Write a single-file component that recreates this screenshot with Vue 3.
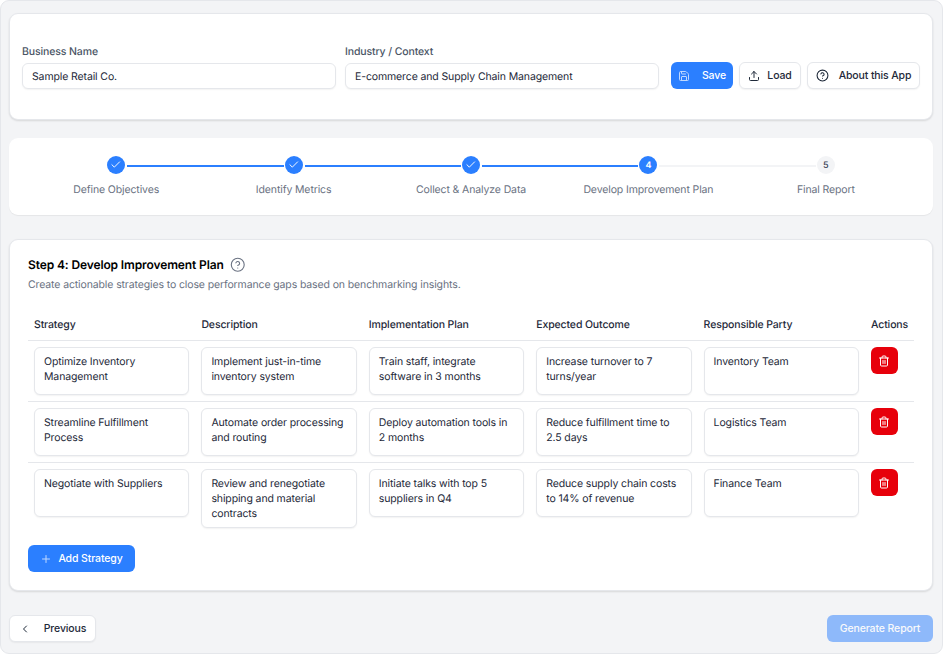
<script setup>
const steps = [
  { label: 'Define Objectives', state: 'done' },
  { label: 'Identify Metrics', state: 'done' },
  { label: 'Collect & Analyze Data', state: 'done' },
  { label: 'Develop Improvement Plan', state: 'active' },
  { label: 'Final Report', state: 'todo' },
]
const columns = ['Strategy', 'Description', 'Implementation Plan', 'Expected Outcome', 'Responsible Party']
const rows = [
  ['Optimize Inventory Management', 'Implement just-in-time inventory system', 'Train staff, integrate software in 3 months', 'Increase turnover to 7 turns/year', 'Inventory Team'],
  ['Streamline Fulfillment Process', 'Automate order processing and routing', 'Deploy automation tools in 2 months', 'Reduce fulfillment time to 2.5 days', 'Logistics Team'],
  ['Negotiate with Suppliers', 'Review and renegotiate shipping and material contracts', 'Initiate talks with top 5 suppliers in Q4', 'Reduce supply chain costs to 14% of revenue', 'Finance Team'],
]
</script>

<template>
  <div class="frame">
    <section class="card head">
      <div class="group">
        <label class="label">Business Name</label>
        <div class="field single">Sample Retail Co.</div>
      </div>
      <div class="group">
        <label class="label">Industry / Context</label>
        <div class="field single">E-commerce and Supply Chain Management</div>
      </div>
      <div class="actions">
        <button class="btn primary save">
          <svg class="ic12" viewBox="0 0 24 24"><path d="M15.2 3a2 2 0 0 1 1.4.6l3.8 3.8a2 2 0 0 1 .6 1.4V19a2 2 0 0 1-2 2H5a2 2 0 0 1-2-2V5a2 2 0 0 1 2-2z"/><path d="M17 21v-7a1 1 0 0 0-1-1H8a1 1 0 0 0-1 1v7"/><path d="M7 3v4a1 1 0 0 0 1 1h7"/></svg>
          <span>Save</span>
        </button>
        <button class="btn plain load">
          <svg class="ic12" viewBox="0 0 24 24"><path d="M21 15v4a2 2 0 0 1-2 2H5a2 2 0 0 1-2-2v-4"/><path d="M17 8l-5-5-5 5"/><path d="M12 3v12"/></svg>
          <span>Load</span>
        </button>
        <button class="btn plain about">
          <svg class="ic13" viewBox="0 0 24 24"><circle cx="12" cy="12" r="10"/><path d="M9.09 9a3 3 0 0 1 5.83 1c0 2-3 3-3 3"/><path d="M12 17h.01"/></svg>
          <span>About this App</span>
        </button>
      </div>
    </section>

    <section class="card stepper">
      <div v-for="(s, i) in steps" :key="s.label" class="step">
        <div v-if="i < steps.length - 1" class="link" :class="{ on: s.state === 'done' }"></div>
        <div class="dot" :class="s.state">
          <svg v-if="s.state === 'done'" viewBox="0 0 24 24"><path d="M20 6 9 17l-5-5"/></svg>
          <span v-else>{{ i + 1 }}</span>
        </div>
        <div class="step-label">{{ s.label }}</div>
      </div>
    </section>

    <section class="card main">
      <div class="title-row">
        <h2>Step 4: Develop Improvement Plan</h2>
        <svg class="help" viewBox="0 0 24 24"><circle cx="12" cy="12" r="10"/><path d="M9.09 9a3 3 0 0 1 5.83 1c0 2-3 3-3 3"/><path d="M12 17h.01"/></svg>
      </div>
      <p class="sub">Create actionable strategies to close performance gaps based on benchmarking insights.</p>

      <div class="table">
        <div class="tr th">
          <div v-for="c in columns" :key="c" class="cell">{{ c }}</div>
          <div class="cell">Actions</div>
        </div>
        <div v-for="(r, ri) in rows" :key="ri" class="tr">
          <div v-for="(v, ci) in r" :key="ci" class="cell">
            <div class="field area">{{ v }}</div>
          </div>
          <div class="cell">
            <button class="del" aria-label="Delete">
              <svg viewBox="0 0 24 24"><path d="M3 6h18"/><path d="M19 6v14a2 2 0 0 1-2 2H7a2 2 0 0 1-2-2V6"/><path d="M8 6V4a2 2 0 0 1 2-2h4a2 2 0 0 1 2 2v2"/><path d="M10 11v6"/><path d="M14 11v6"/></svg>
            </button>
          </div>
        </div>
      </div>

      <button class="btn primary add">
        <svg class="ic12" viewBox="0 0 24 24"><path d="M5 12h14"/><path d="M12 5v14"/></svg>
        <span>Add Strategy</span>
      </button>
    </section>

    <footer class="foot">
      <button class="btn plain prev">
        <svg class="ic12" viewBox="0 0 24 24"><path d="m15 18-6-6 6-6"/></svg>
        <span>Previous</span>
      </button>
      <button class="btn primary gen">Generate Report</button>
    </footer>
  </div>
</template>

<style scoped>
.frame {
  box-sizing: border-box;
  width: 943px;
  height: 654px;
  padding: 12px 9px 11px 8px;
  display: flex;
  flex-direction: column;
  background: #f3f4f6;
  border: 1px solid #e5e7eb;
  border-radius: 9px;
  font-family: Inter, "Liberation Sans", sans-serif;
  font-size: 10.5px;
  line-height: 15px;
  letter-spacing: -0.12px;
  color: #101828;
  overflow: hidden;
  text-rendering: geometricPrecision;
}
.card {
  box-sizing: border-box;
  background: #fff;
  border-radius: 9px;
}
.head {
  height: 107px;
  flex: none;
  padding: 0 12px 30px 12px;
  display: flex;
  align-items: flex-end;
  gap: 9px;
  border: 1px solid #e5e7eb;
  box-shadow: 0 1px 2px rgba(0, 0, 0, 0.12);
}
.group {
  width: 314px;
  flex: none;
}
.label {
  display: block;
  margin-bottom: 4px;
  font-weight: 500;
  color: #4a5565;
}
.field {
  box-sizing: border-box;
  background: #fff;
  border: 1px solid #e5e7eb;
  border-radius: 6px;
  box-shadow: 0 1px 1.5px rgba(0, 0, 0, 0.05);
  color: #1e2939;
}
.single {
  height: 26px;
  padding: 0 9px;
  line-height: 25px;
}
.actions {
  display: flex;
  gap: 6px;
  margin-left: 3px;
}
.btn {
  box-sizing: border-box;
  height: 27px;
  display: inline-flex;
  align-items: center;
  justify-content: center;
  font: inherit;
  letter-spacing: inherit;
  font-weight: 500;
  border-radius: 6px;
  padding: 0;
  cursor: pointer;
}
.btn.primary {
  background: #2b7fff;
  color: #fff;
  border: 0;
}
.btn.plain {
  background: #fff;
  color: #1e2939;
  border: 1px solid #e5e7eb;
  box-shadow: 0 1px 1.5px rgba(0, 0, 0, 0.05);
}
.ic12, .ic13 {
  flex: none;
  fill: none;
  stroke: currentColor;
  stroke-width: 2;
  stroke-linecap: round;
  stroke-linejoin: round;
}
.ic12 { width: 12px; height: 12px; }
.ic13 { width: 13px; height: 13px; }
.save { width: 62px; gap: 12px; }
.save .ic12 { opacity: 0.7; }
.load { width: 62px; gap: 7px; }
.about { width: 113px; gap: 10px; }

.stepper {
  height: 77px;
  flex: none;
  margin-top: 18px;
  padding: 18px 18.5px 0;
  display: flex;
  box-shadow: 0 1px 1px rgba(0, 0, 0, 0.06);
}
.step {
  position: relative;
  flex: 1;
  display: flex;
  flex-direction: column;
  align-items: center;
}
.link {
  position: absolute;
  top: 8.5px;
  left: calc(50% + 11px);
  width: calc(100% - 21px);
  height: 2px;
  background: #f3f4f6;
}
.link.on { background: #2b7fff; }
.dot {
  width: 18px;
  height: 18px;
  border-radius: 50%;
  display: flex;
  align-items: center;
  justify-content: center;
  font-size: 9px;
  font-weight: 600;
}
.dot svg {
  width: 11.5px;
  height: 11.5px;
  fill: none;
  stroke: #fff;
  stroke-width: 2;
  stroke-linecap: round;
  stroke-linejoin: round;
}
.dot.done, .dot.active { background: #2b7fff; color: #fff; }
.dot.todo { background: #f3f4f6; color: #364153; font-weight: 500; }
.step-label {
  margin-top: 7.5px;
  color: #6a7282;
}

.main {
  height: 352px;
  flex: none;
  margin-top: 24px;
  padding: 16px 18px 0;
  border: 1px solid #e5e7eb;
  box-shadow: 0 1px 2px rgba(0, 0, 0, 0.12);
}
.title-row {
  display: flex;
  align-items: center;
  gap: 6px;
}
h2 {
  margin: 0;
  font-size: 12px;
  line-height: 18px;
  font-weight: 600;
  color: #000;
}
.help {
  width: 15.5px;
  height: 15.5px;
  fill: none;
  stroke: #6a7282;
  stroke-width: 1.7;
  stroke-linecap: round;
  stroke-linejoin: round;
}
.sub {
  margin: 3px 0 0;
  color: #6a7282;
}
.table { margin-top: 18px; }
.tr {
  display: grid;
  grid-template-columns: repeat(5, 1fr) 49px;
  border-top: 1px solid #e5e7eb;
  padding: 6px 0;
  align-items: start;
}
.th {
  border-top: 0;
  padding: 0 0 1px;
  height: 29px;
  align-items: center;
  font-weight: 500;
  color: #1e2939;
}
.cell { padding: 0 6px; }
.tr:not(.th) .cell { min-height: 48px; }
.area {
  min-height: 48px;
  padding: 6px 9px;
}
.del {
  width: 27px;
  height: 27px;
  border: 0;
  border-radius: 6px;
  background: #e7000b;
  display: flex;
  align-items: center;
  justify-content: center;
  padding: 0;
}
.del svg {
  width: 12px;
  height: 12px;
  fill: none;
  stroke: #fff;
  stroke-width: 2;
  stroke-linecap: round;
  stroke-linejoin: round;
}
.add {
  width: 107px;
  margin-top: 11px;
  gap: 6px;
}
.add .ic12 { opacity: 0.7; }
.foot {
  margin-top: 24px;
  display: flex;
  justify-content: space-between;
}
.prev { width: 87px; gap: 13px; }
.gen {
  width: 106px;
  opacity: 0.5;
}
</style>

<style>
html, body { background: #fff; }
</style>
